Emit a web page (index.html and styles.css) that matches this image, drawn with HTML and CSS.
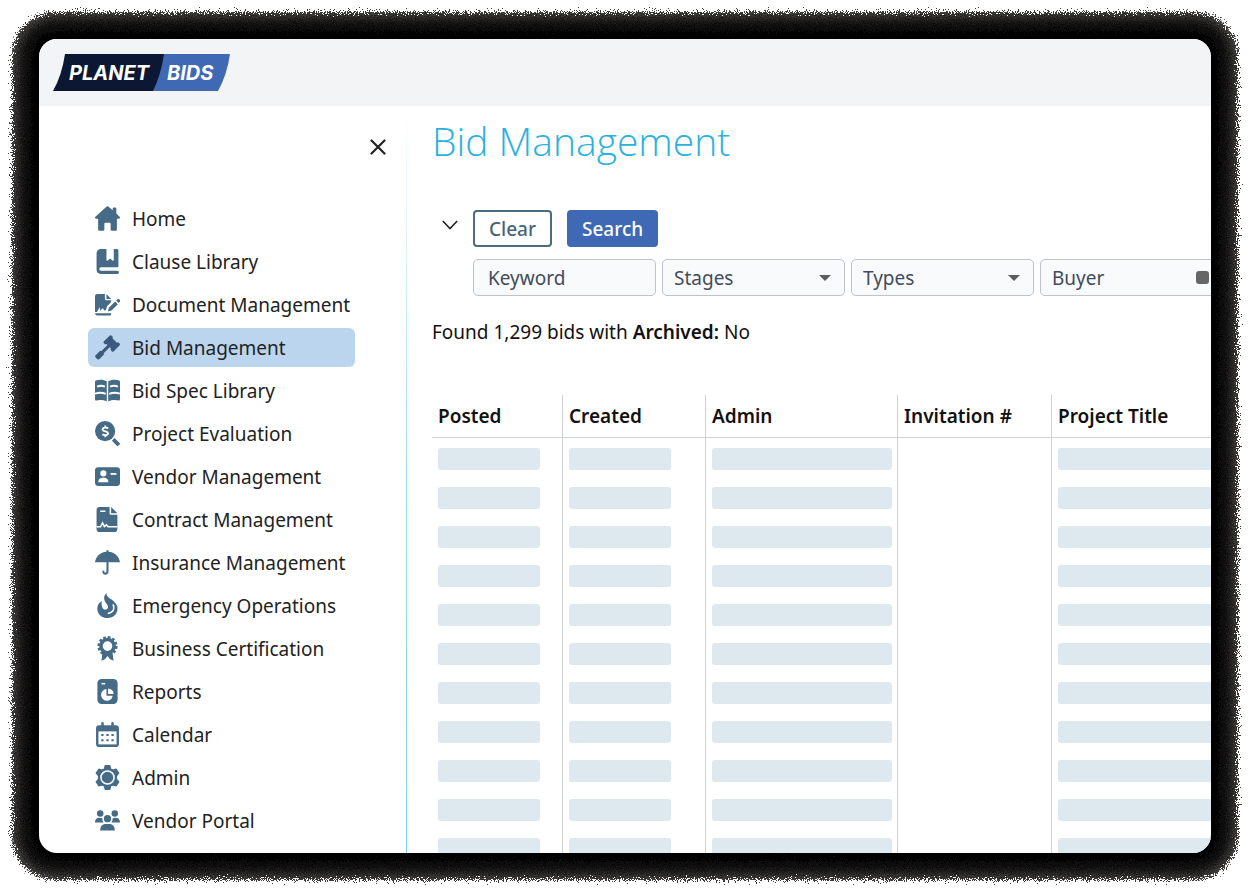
FILE: index.html
```html
<!DOCTYPE html>
<html lang="en">
<head>
    <meta charset="UTF-8"/>
    <meta name="viewport" content="width=device-width, initial-scale=1.0"/>
    <title>Bid Management</title>
    <link rel="stylesheet" href="styles.css">
</head>
<body>
<!-- rough edge of the device frame -->
<svg class="defs" width="0" height="0" aria-hidden="true">
    <filter id="grain" x="-2%" y="-2%" width="104%" height="104%">
        <feTurbulence type="fractalNoise" baseFrequency="0.9" numOctaves="2" seed="4" result="noise"/>
        <feDisplacementMap in="SourceGraphic" in2="noise" scale="16" xChannelSelector="R" yChannelSelector="G"/>
    </filter>
</svg>

<div class="frame">
    <div class="window">
        <header class="header">
            <svg class="logo" viewBox="0 0 177 37" width="177" height="37" role="img" aria-label="Planet Bids">
                <path fill="#3f69b4" d="M105 0H177Q174 21 165 37H96Z"/>
                <path fill="#0b1733" d="M12 0H111Q108 21 100 37H0Q9 21 12 0Z"/>
                <text class="logo-text" x="16" y="26">PLANET</text>
                <text class="logo-text" x="114" y="26">BIDS</text>
            </svg>
        </header>

        <div class="layout">
            <!-- Sidebar -->
            <aside class="sidebar">
                <button class="close" type="button" aria-label="Close menu">
                    <svg viewBox="0 0 16 16" width="16" height="16"><path d="M1.5 1.5l13 13M14.5 1.5l-13 13" fill="none" stroke="#222" stroke-width="2.2" stroke-linecap="round"/></svg>
                </button>
                <nav class="menu">
                    <a class="menu-item" href="#">
                        <svg class="icon" viewBox="0 0 24 24"><path d="M11.2.5a1.2 1.2 0 0 1 1.6 0L17 4.1V2.5a1 1 0 0 1 1-1h1.500a1 1 0 0 1 1 1v4.700L23.600 10.200c.8.8.4 2-.8 2H21V22.500a1.200 1.200 0 0 1-1.200 1.200h-3.600a1.200 1.200 0 0 1-1.200-1.200V17a1 1 0 0 0-1-1h-4a1 1 0 0 0-1 1v5.500a1.200 1.200 0 0 1-1.200 1.200H4.200A1.200 1.200 0 0 1 3 22.500V12.200H1.200c-1.200 0-1.600-1.200-.8-2z"/></svg>
                        Home
                    </a>
                    <a class="menu-item" href="#">
                        <svg class="icon" viewBox="0 0 24 24"><path d="M5.500 0H11v10.500c0 .7.700.9 1.200.5l2.300-2 2.300 2c.5.4 1.200.2 1.200-.5V0h3a1.500 1.500 0 0 1 1.500 1.500v14.500a1.500 1.500 0 0 1-1.500 1.500H5.800a1.700 1.700 0 0 0 0 3.400H21.500a1.500 1.500 0 0 1 0 3H5.500A4 4 0 0 1 1.500 20V4a4 4 0 0 1 4-4z"/></svg>
                        Clause Library
                    </a>
                    <a class="menu-item" href="#">
                        <svg class="icon" viewBox="0 0 24 24"><path d="M2 2h7.500v4.500A1.500 1.500 0 0 0 11 8h4.500v1.500l-4 4.200-1 3.800-1.500.2-1.500-2.200-2.500 2.200-.7-3-2.300 4.500H0V4a2 2 0 0 1 2-2zM11 2l4.500 4.700H11zM0 20.500h15.500v.5a1.500 1.500 0 0 1-1.500 1.500H2A2 2 0 0 1 0 20.500zM19.300 9.200l2.600 2.600-6 6-3.500 1 .9-3.600zM20.300 8.200l1-1a1.600 1.600 0 0 1 2.300 0l.1.200a1.600 1.600 0 0 1 0 2.200l-.9 1z"/></svg>
                        Document Management
                    </a>
                    <a class="menu-item active" href="#" aria-current="page">
                        <svg class="icon" viewBox="0 0 24 24"><path d="M14 .7a1.500 1.500 0 0 1 2.100 0l.5.500a1.500 1.500 0 0 1 .1 1.900l4.300 4.300a1.500 1.500 0 0 1 1.900.1l.6.500a1.500 1.500 0 0 1 0 2.100l-5.400 5.400a1.500 1.500 0 0 1-2.100 0l-.6-.6a1.500 1.500 0 0 1 0-1.900l-1.300-1.300-5.700 5.800a1.500 1.500 0 0 1-.1 1.500l-4 4a1.600 1.600 0 0 1-2.300 0L.7 21.700a1.600 1.600 0 0 1 0-2.300l4-4a1.500 1.500 0 0 1 1.500-.1L12 9.600 10.900 8.700a1.500 1.500 0 0 1-1.700 0l-.6-.6a1.500 1.500 0 0 1 0-2.100z"/></svg>
                        Bid Management
                    </a>
                    <a class="menu-item" href="#">
                        <svg class="icon" viewBox="0 0 24 24"><path d="M11.300 3.200v19.300C8 20.800 4 20.700 1.200 21.500.5 21.700 0 21.300 0 20.600V3.500c0-.5.300-.9.700-1.100C4 1.200 8.500 1.200 11.300 3.200zM12.700 3.200c2.800-2 7.300-2 10.600-.8.400.2.700.6.700 1.100v17.100c0 .7-.5 1.100-1.200.9-2.800-.8-6.800-.7-10.100 1z"/><path class="cut" d="M2 8.200q3.800-1.600 7.500 0M14.500 8.200q3.700-1.600 7.500 0M0 15q5.500-1.800 10.300.2M13.700 15.200Q18.500 13.200 24 15"/></svg>
                        Bid Spec Library
                    </a>
                    <a class="menu-item" href="#">
                        <svg class="icon" viewBox="0 0 24 24"><circle cx="9.700" cy="9.700" r="9.700"/><path d="M18.700 17l4.800 4.800-1.900 1.900-4.700-4.800z" stroke="#466b87"/><path class="cut" d="M12.600 7.200C11.500 6 7.500 5.800 7.300 8c-.2 2.400 5.300 1.500 5.200 4-.1 2.100-4 2-5.400.8M9.900 4.200v2M9.900 13.600v2"/></svg>
                        Project Evaluation
                    </a>
                    <a class="menu-item" href="#">
                        <svg class="icon" viewBox="0 0 24 24"><rect y="3" width="24" height="18" rx="3"/><circle class="white" cx="8" cy="9" r="2.900"/><path class="white" d="M3.200 17.500c0-3.400 2-4.300 4.800-4.300s4.800.9 4.800 4.300z"/><path class="cut" d="M15 9.500h5.500"/></svg>
                        Vendor Management
                    </a>
                    <a class="menu-item" href="#">
                        <svg class="icon" viewBox="0 0 24 24"><path d="M4.500 0H14v6a1.500 1.500 0 0 0 1.500 1.500h6V21a3 3 0 0 1-3 3h-14a3 3 0 0 1-3-3V3a3 3 0 0 1 3-3zM15.500 0l6 6h-6z"/><path class="cut thin" d="M5 4h5M1.500 19h3.800l2-3.700 1.700 3.400 2-1.500 1.500 1.800h9"/></svg>
                        Contract Management
                    </a>
                    <a class="menu-item" href="#">
                        <svg class="icon" viewBox="0 0 24 24"><path d="M11 1a1 1 0 0 1 2 0v.7c6 .5 10.200 4.500 11 10.100H0C.8 6.200 5 2.200 11 1.700z"/><path class="line" d="M12 12v8.500c0 3-4 3-4 .2"/></svg>
                        Insurance Management
                    </a>
                    <a class="menu-item" href="#">
                        <svg class="icon" viewBox="0 0 24 24"><path d="M11 0c-.7 5.500 9.300 6 10.600 14.200C22 19.700 18 24 12 24s-9.800-4-9.800-9.200c0-3 1.500-5.600 4.300-7-.6 4.200.4 7.700 3.200 8.100 3 .2 3.600-2.800 1.600-5.400C8.800 7.800 7.300 3.500 11 0z"/><path class="cut thin" d="M17.300 11c2 4.200 0 8-5 8.600"/></svg>
                        Emergency Operations
                    </a>
                    <a class="menu-item" href="#">
                        <svg class="icon" viewBox="0 0 24 24"><path d="M7.200 15.500L6.200 23.800 9.500 22.300l2.500-3 2.500 3 3.300 1.500-1-8.300z"/><circle cx="12" cy="9.700" r="6.300" fill="none" stroke="#466b87" stroke-width="3.400"/><circle cx="12" cy="9.700" r="8.500" fill="none" stroke="#466b87" stroke-width="2.400" stroke-dasharray="2.600 1.850"/></svg>
                        Business Certification
                    </a>
                    <a class="menu-item" href="#">
                        <svg class="icon" viewBox="0 0 24 24"><rect x="2.300" width="19.400" height="24" rx="4"/><path class="cut thin" d="M6.300 4.500h3.500"/><path class="white" d="M11 9.700V16h6a5.600 5.600 0 1 1-6-6.300z"/><path class="white" d="M12.600 9v5.300h5.300A5.400 5.400 0 0 0 12.600 9z"/></svg>
                        Reports
                    </a>
                    <a class="menu-item" href="#">
                        <svg class="icon" viewBox="0 0 24 24"><path d="M6 1.300a1.200 1.200 0 0 1 2.400 0V3h7.200V1.300a1.200 1.200 0 0 1 2.400 0V3h2a3 3 0 0 1 3 3v15a3 3 0 0 1-3 3H4a3 3 0 0 1-3-3V6a3 3 0 0 1 3-3h2z"/><rect class="white" x="3.300" y="9" width="17.400" height="12.500"/><path d="M6 11.500h2.200v2H6zm4.900 0h2.200v2h-2.200zm4.900 0H18v2h-2.200zM6 16.500h2.200v2H6zm4.900 0h2.200v2h-2.200zm4.900 0H18v2h-2.200z"/></svg>
                        Calendar
                    </a>
                    <a class="menu-item" href="#">
                        <svg class="icon" viewBox="0 0 24 24"><path d="M9.800.4h4.400l.9 3.300 2 1.100 3.200-1 2.600 4-2.200 2.700v3l2.200 2.700-2.600 4-3.200-1-2 1.100-.9 3.300H9.800l-.9-3.300-2-1.100-3.200 1-2.600-4 2.200-2.700v-3L1.100 7.800l2.600-4 3.200 1 2-1.100z" stroke="#466b87" stroke-linejoin="round"/><circle class="cut thin" cx="12" cy="12" r="6.300"/></svg>
                        Admin
                    </a>
                    <a class="menu-item" href="#">
                        <svg class="icon" viewBox="0 0 24 24"><circle cx="5" cy="5.300" r="3.100"/><circle cx="19" cy="5.300" r="3.100"/><circle cx="12" cy="10.200" r="3.500"/><path d="M0 14c0-3 1.500-4.600 4-4.600 1.200 0 2.300.2 3.200.7-.2 1.700.2 2.900 1.200 3.900zM24 14c0-3-1.500-4.600-4-4.600-1.200 0-2.300.2-3.200.7.2 1.700-.2 2.900-1.200 3.900zM5 21.500c0-4 2-6.200 5.300-6.200h3.400c3.300 0 5.300 2.200 5.300 6.200z"/></svg>
                        Vendor Portal
                    </a>
                </nav>
            </aside>

            <!-- Content -->
            <main class="content">
                <h1 class="title">Bid Management</h1>

                <form class="filters">
                    <button class="toggle" type="button" aria-label="Toggle filters">
                        <svg viewBox="0 0 16 10" width="16" height="10"><path d="M.8 1l7.200 7.500L15.200 1" fill="none" stroke="#222" stroke-width="1.600"/></svg>
                    </button>
                    <div class="filter-rows">
                        <div class="actions">
                            <button class="button clear" type="reset">Clear</button>
                            <button class="button search" type="button">Search</button>
                        </div>
                        <div class="fields">
                            <input class="field keyword" type="text" placeholder="Keyword" aria-label="Keyword">
                            <div class="select caret">
                                <select class="field" aria-label="Stages"><option>Stages</option></select>
                            </div>
                            <div class="select caret">
                                <select class="field" aria-label="Types"><option>Types</option></select>
                            </div>
                            <div class="select square">
                                <select class="field" aria-label="Buyer"><option>Buyer</option></select>
                            </div>
                        </div>
                    </div>
                </form>

                <p class="summary">Found 1,299 bids with <b>Archived:</b> No</p>

                <table class="bids">
                    <thead>
                    <tr>
                        <th class="posted">Posted</th>
                        <th class="created">Created</th>
                        <th class="admin">Admin</th>
                        <th class="invitation">Invitation #</th>
                        <th class="project">Project Title</th>
                    </tr>
                    </thead>
                    <tbody id="rows"></tbody>
                </table>
            </main>
        </div>
    </div>
</div>

<script src="rows.js"></script>
</body>
</html>
```

FILE: styles.css
```css
* {
    box-sizing: border-box;
}

body {
    margin: 0;
    height: 100vh;
    padding: 10px 9px 9px 10px;
    background-color: #fff;
    color: #222;
    font-family: "Noto Sans", "Open Sans", sans-serif;
    font-size: 19px;
    line-height: 24px;
    overflow: hidden;
}

.defs {
    position: absolute;
}

/* device frame */
.frame {
    position: relative;
    height: 100%;
    padding: 29px;
}

.frame::before {
    content: "";
    position: absolute;
    inset: 2px;
    border-radius: 44px;
    background-color: #060606;
    box-shadow: inset 0 0 16px 4px #5c5856;
    filter: url(#grain);
}

.window {
    position: relative;
    display: flex;
    flex-direction: column;
    height: 100%;
    border-radius: 18px;
    background-color: #fff;
    overflow: hidden;
}

.header {
    flex-shrink: 0;
    height: 67px;
    padding: 15px 14px;
    background-color: #f3f4f6;
}

.logo {
    display: block;
}

.logo-text {
    fill: #fff;
    font-family: Inter, "Noto Sans", sans-serif;
    font-size: 20px;
    font-weight: bold;
    font-style: italic;
}

.layout {
    display: flex;
    flex: 1;
    min-height: 0;
}

/* sidebar */
.sidebar {
    display: flex;
    flex-direction: column;
    flex-shrink: 0;
    width: 368px;
    border-right: 1px solid;
    border-image: linear-gradient(#fff, #9bdcf0 50%, #7fd0ec) 1;
}

.close {
    align-self: flex-end;
    display: flex;
    margin: 28px 15px 39px 0;
    padding: 5px;
    border: none;
    background: none;
    cursor: pointer;
}

.menu {
    display: flex;
    flex-direction: column;
    gap: 4px;
    margin: 0 51px 0 49px;
}

.menu-item {
    display: flex;
    align-items: center;
    gap: 12px;
    height: 39px;
    padding: 0 7px;
    border-radius: 6px;
    color: #222;
    text-decoration: none;
    white-space: nowrap;
}

.menu-item.active {
    background-color: #bcd5ee;
}

.icon {
    flex-shrink: 0;
    width: 25px;
    height: 25px;
    fill: #466b87;
}

.active .icon {
    fill: #3d5a7c;
}

.icon .white {
    fill: #fff;
}

.icon .cut {
    fill: none;
    stroke: #fff;
    stroke-width: 1.8;
}

.icon .thin {
    stroke-width: 1.5;
}

.icon .line {
    fill: none;
    stroke: #466b87;
    stroke-width: 2;
    stroke-linecap: round;
}

/* content */
.content {
    flex: 1;
    min-width: 0;
    padding: 11px 0 0 25px;
    overflow: hidden;
}

.title {
    margin: 0;
    color: #2bb1e0;
    font-family: "Open Sans", "Noto Sans", sans-serif;
    font-size: 39px;
    font-weight: 300;
    line-height: 48px;
}

.filters {
    display: flex;
    margin-top: 45px;
}

.toggle {
    align-self: flex-start;
    flex-shrink: 0;
    width: 41px;
    padding: 10px 0 0 10px;
    border: none;
    background: none;
    text-align: left;
    line-height: 10px;
    cursor: pointer;
}

.filter-rows {
    display: flex;
    flex-direction: column;
    gap: 12px;
}

.actions {
    display: flex;
    gap: 15px;
}

.button {
    height: 37px;
    padding: 0 15px;
    border: none;
    border-radius: 4px;
    font: inherit;
    font-weight: 500;
    cursor: pointer;
}

.clear {
    padding: 0 14px;
    border: 2px solid #4a6b80;
    background-color: #fff;
    color: #4a6378;
}

.search {
    background-color: #3f69b4;
    color: #fff;
}

.fields {
    display: flex;
    gap: 6px;
}

.select {
    position: relative;
    flex-shrink: 0;
}

.field {
    display: block;
    flex-shrink: 0;
    width: 183px;
    height: 37px;
    padding: 0 11px;
    border: 1px solid #bfc3c9;
    border-radius: 5px;
    background-color: #f8fafc;
    color: #434b5b;
    font: inherit;
    appearance: none;
}

.keyword {
    padding: 0 14px;
}

.field::placeholder {
    color: #434b5b;
    opacity: 1;
}

.select::after {
    content: "";
    position: absolute;
    pointer-events: none;
}

.caret::after {
    top: 16px;
    right: 14px;
    border: 6px solid transparent;
    border-top-color: #5b5f60;
    border-bottom: none;
}

.square::after {
    top: 12px;
    right: 14px;
    width: 13px;
    height: 13px;
    border-radius: 3px;
    background-color: #666;
}

.summary {
    margin: 24px 0 0;
    color: #111;
}

.summary b {
    font-weight: 600;
}

.bids {
    width: 920px;
    margin-top: 51px;
    table-layout: fixed;
    border-spacing: 0;
}

.bids th,
.bids td {
    padding: 0 5px 0 6px;
    border-left: 1px solid #cdd1d6;
}

.bids th:first-child,
.bids td:first-child {
    border-left: none;
}

.bids th {
    height: 43px;
    border-bottom: 1px solid #cdd1d6;
    color: #111;
    font-weight: 600;
    text-align: left;
}

.bids td {
    height: 39px;
    padding-top: 10px;
    vertical-align: top;
}

.posted {
    width: 130px;
}

.created {
    width: 143px;
}

.admin {
    width: 192px;
}

.invitation {
    width: 154px;
}

.bar {
    height: 22px;
    border-radius: 3px;
    background-color: #dde8ef;
}

.bar.short {
    width: 102px;
}
```

FILE: rows.js
```js
const rows = document.getElementById("rows");

// placeholder rows, the Invitation # column stays empty
for (let i = 0; i < 11; i++) {
    const row = rows.insertRow();
    row.innerHTML = `
        <td><div class="bar short"></div></td>
        <td><div class="bar short"></div></td>
        <td><div class="bar"></div></td>
        <td></td>
        <td><div class="bar"></div></td>`;
}
```
